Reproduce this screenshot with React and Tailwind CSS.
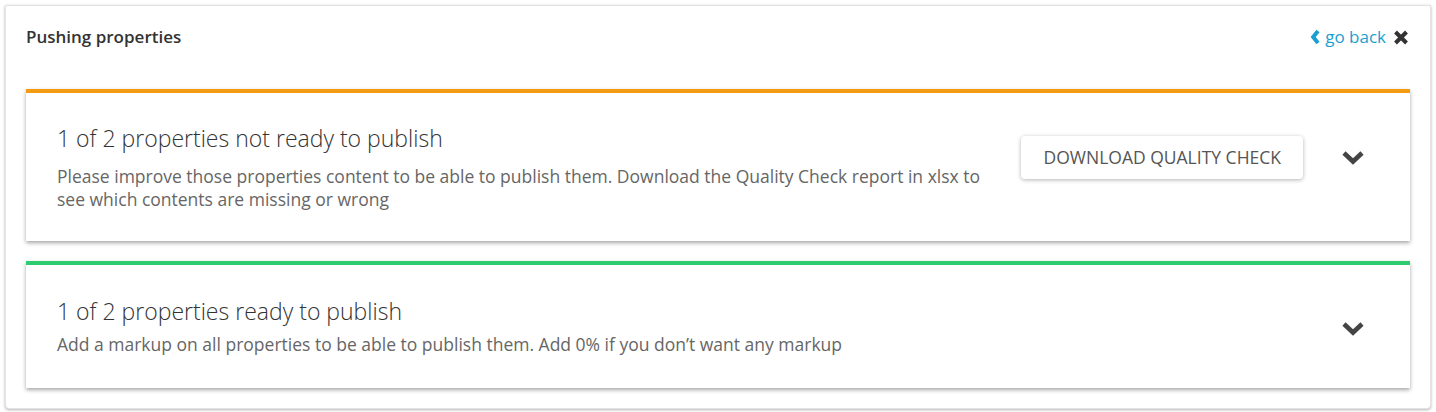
import React from "react";

function ChevronDown() {
  return (
    <svg viewBox="0 0 24 15" className="w-[24px] h-[15px] ml-[38px] text-[#444]" fill="none">
      <path d="M3 3 L12 11.5 L21 3" stroke="currentColor" strokeWidth="4.6" strokeLinejoin="miter" />
    </svg>
  );
}

function PublishCard({ color, title, text, action, gap, pad, side }) {
  return (
    <div
      className={`flex items-start bg-white border-t-4 ${color} ${pad} shadow-[0_2px_4px_rgba(0,0,0,0.35)] pl-[31px] pr-[45px]`}
    >
      <div className="w-[930px]">
        <h2 className="text-[23px] leading-[30px] font-light text-[#333]">{title}</h2>
        <p className={`${gap} text-[17.5px] leading-[23px] text-[#666]`}>{text}</p>
      </div>
      <div className={`flex-1 flex items-center justify-end ${side}`}>
        {action}
        <ChevronDown />
      </div>
    </div>
  );
}

export default function App() {
  return (
    <div className="bg-white font-['Open_Sans',sans-serif] pt-[5px] px-[5px] h-[412px]">
      <div className="bg-white border border-[#e2e2e2] shadow-[0_1px_3px_rgba(0,0,0,0.3)] rounded-b-sm px-[20px] pb-[20px]">
        <div className="flex items-center justify-between pt-[20px] pb-[41px]">
          <h1 className="text-[17px] leading-[22px] font-semibold text-[#333]">Pushing properties</h1>
          <div className="flex items-center mr-[1px]">
            <a href="#" className="flex items-center text-[17px] leading-[22px] text-[#1a9fd0]">
              <svg viewBox="0 0 10 16" className="w-[10px] h-[16px] mr-[5px]" fill="none">
                <path d="M8 2 L3.2 8 L8 14" stroke="currentColor" strokeWidth="4" />
              </svg>
              go back
            </a>
            <svg viewBox="0 0 16 15" className="ml-[7px] w-[16px] h-[15px] text-[#333]" fill="none">
              <path d="M2.5 2 L13.5 13 M13.5 2 L2.5 13" stroke="currentColor" strokeWidth="4" />
            </svg>
          </div>
        </div>
        <div className="flex flex-col gap-[20px]">
          <PublishCard
            color="border-[#f39c12]"
            pad="pt-[30px] pb-[30px]"
            gap="mt-[12px]"
            side="mt-[13px]"
            title="1 of 2 properties not ready to publish"
            text="Please improve those properties content to be able to publish them. Download the Quality Check report in xlsx to see which contents are missing or wrong"
            action={
              <button className="h-[43px] px-[22px] rounded bg-white text-[17.5px] text-[#555] shadow-[0_1px_4px_rgba(0,0,0,0.3)]">
                DOWNLOAD QUALITY CHECK
              </button>
            }
          />
          <PublishCard
            color="border-[#2ecc71]"
            pad="pt-[31px] pb-[32px]"
            gap="mt-[7px]"
            side="mt-[11px]"
            title="1 of 2 properties ready to publish"
            text="Add a markup on all properties to be able to publish them. Add 0% if you don’t want any markup"
            action={<div className="h-[43px]" />}
          />
        </div>
      </div>
    </div>
  );
}
